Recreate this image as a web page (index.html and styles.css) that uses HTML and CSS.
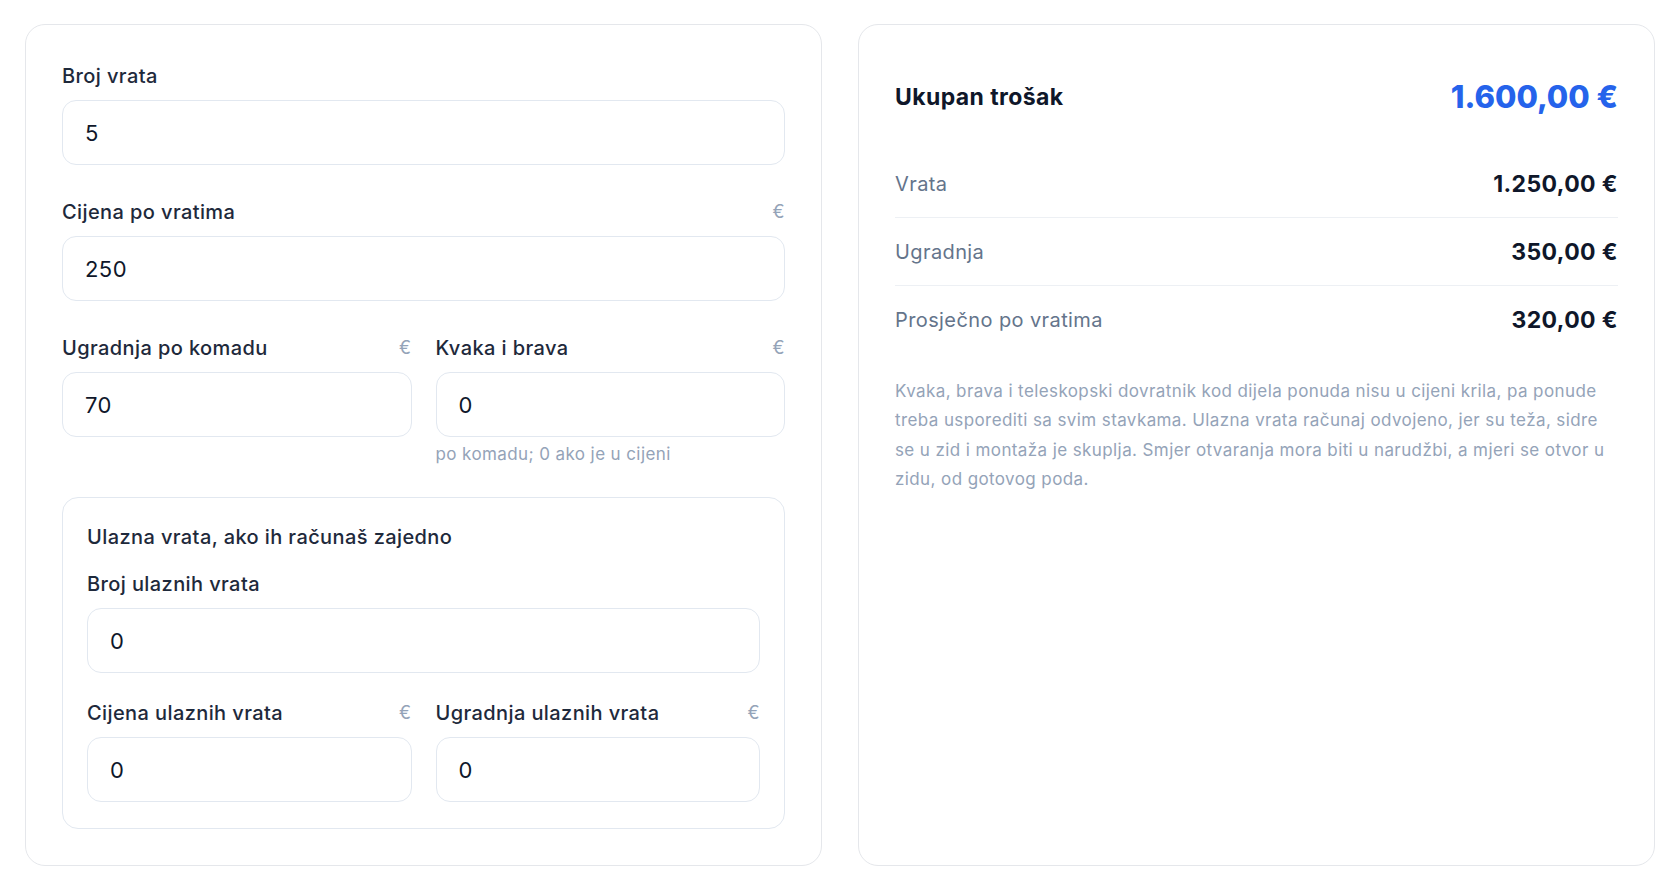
FILE: index.html
```html
<!DOCTYPE html>
<html lang="hr">
<head>
  <meta charset="UTF-8">
  <meta name="viewport" content="width=device-width, initial-scale=1.0">
  <title>Trošak vrata</title>
  <link rel="stylesheet" href="styles.css">
</head>
<body>
  <div class="calc_wrap">
    <div class="card form_card">
      <div class="field">
        <div class="label_row"><label for="broj">Broj vrata</label></div>
        <input type="text" id="broj" value="5">
      </div>
      <div class="field">
        <div class="label_row"><label for="cijena">Cijena po vratima</label><span class="unit">€</span></div>
        <input type="text" id="cijena" value="250">
      </div>
      <div class="cols">
        <div class="field">
          <div class="label_row"><label for="ugradnja">Ugradnja po komadu</label><span class="unit">€</span></div>
          <input type="text" id="ugradnja" value="70">
        </div>
        <div class="field">
          <div class="label_row"><label for="kvaka">Kvaka i brava</label><span class="unit">€</span></div>
          <input type="text" id="kvaka" value="0">
          <p class="hint">po komadu; 0 ako je u cijeni</p>
        </div>
      </div>
      <div class="box">
        <div class="box_title">Ulazna vrata, ako ih računaš zajedno</div>
        <div class="field">
          <div class="label_row"><label for="ulazna">Broj ulaznih vrata</label></div>
          <input type="text" id="ulazna" value="0">
        </div>
        <div class="cols">
          <div class="field">
            <div class="label_row"><label for="ulazna_cijena">Cijena ulaznih vrata</label><span class="unit">€</span></div>
            <input type="text" id="ulazna_cijena" value="0">
          </div>
          <div class="field">
            <div class="label_row"><label for="ulazna_ugradnja">Ugradnja ulaznih vrata</label><span class="unit">€</span></div>
            <input type="text" id="ulazna_ugradnja" value="0">
          </div>
        </div>
      </div>
    </div>

    <div class="card result_card">
      <div class="total">
        <span class="total_label">Ukupan trošak</span>
        <span class="total_value">1.600,00 €</span>
      </div>
      <div class="row">
        <span>Vrata</span>
        <strong>1.250,00 €</strong>
      </div>
      <div class="row">
        <span>Ugradnja</span>
        <strong>350,00 €</strong>
      </div>
      <div class="row">
        <span>Prosječno po vratima</span>
        <strong>320,00 €</strong>
      </div>
      <p class="note">Kvaka, brava i teleskopski dovratnik kod dijela ponuda nisu u cijeni krila, pa ponude treba usporediti sa svim stavkama. Ulazna vrata računaj odvojeno, jer su teža, sidre se u zid i montaža je skuplja. Smjer otvaranja mora biti u narudžbi, a mjeri se otvor u zidu, od gotovog poda.</p>
    </div>
  </div>
</body>
</html>
```

FILE: styles.css
```css
:root {
  /* color */
  --color_main: #2563eb;
  --color_line: #e2e8f0;
  --color_muted: #94a3b8;
}

* {
  box-sizing: border-box;
  font-family: Inter, "Noto Sans", Arial, sans-serif;
}

body {
  margin: 0;
  background: #fff;
  color: #1e293b;
  letter-spacing: 0.025em;
}

.calc_wrap {
  display: grid;
  grid-template-columns: 1fr 1fr;
  gap: 36px;
  padding: 24px 25px 25px;
}

.card {
  padding: 36px;
  border: 1px solid #e5e7eb;
  border-radius: 20px;
  background: #fff;
}

.form_card {
  display: flex;
  flex-direction: column;
  gap: 32px;
}

.label_row {
  display: flex;
  justify-content: space-between;
  align-items: center;
  margin-bottom: 9px;
  line-height: 30px;
}

.label_row label {
  color: #1e293b;
  font-size: 20px;
  font-weight: 500;
}

.unit {
  color: var(--color_muted);
  font-size: 18px;
}

.field input {
  display: block;
  width: 100%;
  height: 65px;
  margin: 0;
  padding: 0 22px;
  border: 1px solid var(--color_line);
  border-radius: 14px;
  background: #fff;
  color: #0f172a;
  font-size: 22px;
  letter-spacing: 0.02em;
  outline: none;
}

.cols {
  display: grid;
  grid-template-columns: 1fr 1fr;
  gap: 24px;
}

.hint {
  margin: 6px 0 0;
  color: var(--color_muted);
  font-size: 17px;
  line-height: 22px;
}

.box {
  padding: 24px 24px 26px;
  border: 1px solid var(--color_line);
  border-radius: 16px;
}

.box_title {
  margin-bottom: 17px;
  color: #1e293b;
  font-size: 20px;
  font-weight: 500;
  line-height: 30px;
}

.box .cols {
  margin-top: 25px;
}

.total {
  display: flex;
  justify-content: space-between;
  align-items: center;
  margin-bottom: 17px;
  padding: 16px 0;
  line-height: 40px;
}

.total_label {
  color: #0f172a;
  font-size: 23px;
  font-weight: 700;
}

.total_value {
  color: var(--color_main);
  font-size: 31px;
  font-weight: 800;
  letter-spacing: 0;
}

.row {
  display: flex;
  justify-content: space-between;
  align-items: center;
  padding: 19px 0 18px;
  border-bottom: 1px solid #edf0f4;
  line-height: 30px;
}

.row:last-of-type {
  border-bottom: 0;
}

.row span {
  color: #64748b;
  font-size: 20px;
}

.row strong {
  color: #0f172a;
  font-size: 23px;
  font-weight: 700;
}

.note {
  margin: 24px 0 0;
  color: var(--color_muted);
  font-size: 17px;
  line-height: 29.3px;
}
```
